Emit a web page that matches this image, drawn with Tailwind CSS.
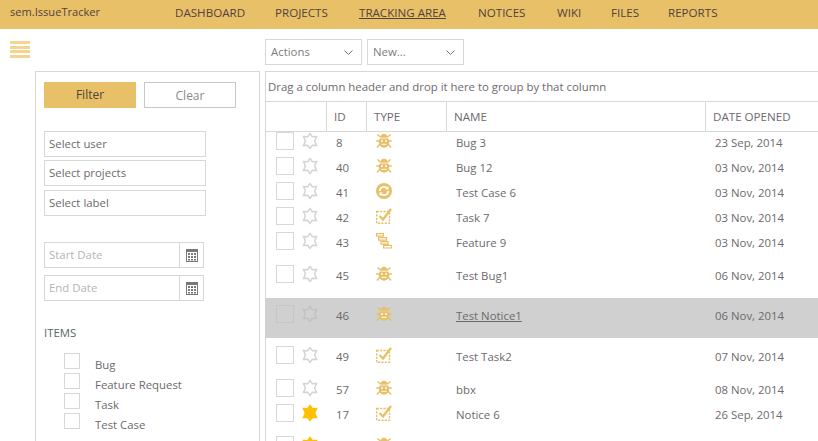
<!DOCTYPE html>
<html lang="en">
<head>
<meta charset="UTF-8">
<title>sem.IssueTracker</title>
<script src="https://cdn.jsdelivr.net/npm/@tailwindcss/browser@4"></script>
</head>
<body class="h-[441px] w-[818px] overflow-hidden bg-white font-['Open_Sans',sans-serif] text-[11.4px] text-[#6e696d]">
<svg class="hidden">
  <symbol id="star" viewBox="0 0 18 18"><path d="M9 1.500l2.300 3.300 4.200-.3-1.900 4.500 1.900 4.500-4.200-.3L9 16.500l-2.300-3.300-4.200.3L4.400 9 2.500 4.500l4.200.3z"/></symbol>
  <symbol id="bug" viewBox="0 0 16 16"><g fill="none" stroke="#e8c068" stroke-width="1.500"><path d="M4.500 4L1.500 1.500M11.500 4l3-2.500M3 8H.2M13 8h2.800M4 11l-3 3.500M12 11l3 3.500"/></g><path d="M8 .8c2.300 0 3.800 1.700 3.800 4H4.200C4.200 2.500 5.700.8 8 .8z" fill="#e8c068"/><path d="M3.700 5.600h8.600c.6 1 .9 2.200.9 3.400 0 3-2.200 5.700-5.200 5.700S2.800 12 2.800 9c0-1.200.3-2.400.9-3.400z" fill="#e8c068"/><circle cx="6" cy="8" r="1" fill="#fff"/><circle cx="10" cy="8" r="1" fill="#fff"/><path d="M5.500 11.300h5" stroke="#fff"/></symbol>
  <symbol id="task" viewBox="0 0 16 16"><path d="M.7 3.500h12.800v11.800H.7z" fill="none" stroke="#e8c068" stroke-width="1.400" stroke-dasharray="2.200 1.200"/><path d="M3.500 8l3.500 3.500L15 1" fill="none" stroke="#e8c068" stroke-width="2.400"/></symbol>
  <symbol id="case" viewBox="0 0 16 16"><circle cx="8" cy="8" r="8" fill="#e8c068"/><path d="M3.800 8a4.200 4.200 0 0 1 7.400-2.700M12.200 8a4.200 4.200 0 0 1-7.400 2.700" fill="none" stroke="#fff" stroke-width="1.700"/><path d="M12.500 3v3.500H9zM3.500 13V9.500H7z" fill="#fff"/></symbol>
  <symbol id="feature" viewBox="0 0 16 16"><g fill="none" stroke="#e8c068" stroke-width="1.200"><path d="M.6.600h6.800v2.600H.6zM2.600 4.600h8v2.600h-8zM5 8.600h7v2.600H5zM7.600 12.400h8V15h-8z"/></g></symbol>
  <symbol id="cal" viewBox="0 0 12 14"><path d="M0 1h12v13H0z" fill="#77787a"/><path d="M1 4h10v9H1z" fill="#fff"/><path d="M2 5h2v2H2zm3 0h2v2H5zm3 0h2v2H8zM2 8h2v2H2zm3 0h2v2H5zm3 0h2v2H8zm-6 3h2v1.500H2zm3 0h2v1.500H5zm3 0h2v1.500H8z" fill="#77787a"/></symbol>
</svg>

<header class="flex h-[29px] items-center bg-[#e8c068] pb-[4px] text-[#54423f]">
  <span class="ml-[10px] w-[165px] text-[11.1px]">sem.IssueTracker</span>
  <nav class="flex text-[11.6px]">
    <a class="w-[100px]">DASHBOARD</a>
    <a class="w-[84px]">PROJECTS</a>
    <a class="w-[119px] underline">TRACKING AREA</a>
    <a class="w-[79px]">NOTICES</a>
    <a class="w-[54px]">WIKI</a>
    <a class="w-[57px]">FILES</a>
    <a>REPORTS</a>
  </nav>
</header>

<div class="flex h-[412px] overflow-hidden">
  <aside class="w-[35px] shrink-0 pt-[12px] pl-[10px]">
    <div class="flex h-[17px] w-[20px] flex-col justify-between">
      <i class="block h-[3px] bg-[#f4d58f]"></i><i class="block h-[3px] bg-[#f4d58f]"></i><i class="block h-[3px] bg-[#f4d58f]"></i><i class="block h-[3px] bg-[#f4d58f]"></i>
    </div>
  </aside>

  <section class="mt-[42px] w-[225px] shrink-0 border-x border-t border-[#d8d8d8] pt-[10px] pl-[8px]">
    <div class="flex gap-[8px]">
      <button class="h-[26px] w-[92px] bg-[#e8c068] text-[12px] text-[#54423f]">Filter</button>
      <button class="h-[26px] w-[92px] border border-[#c8c8c8] pt-[1px] text-[12px] text-[#8a8a8a]">Clear</button>
    </div>
    <div class="mt-[23px] flex flex-col gap-[3px]">
      <div class="flex h-[26px] w-[162px] items-center border border-[#d8d8d8] pl-[4px]">Select user</div>
      <div class="flex h-[26px] w-[162px] items-center border border-[#d8d8d8] pl-[4px]">Select projects</div>
      <div class="mt-[1px] flex h-[26px] w-[162px] items-center border border-[#d8d8d8] pl-[4px]">Select label</div>
    </div>
    <div class="mt-[26px] flex flex-col gap-[7px] text-[#b5b5b5]">
      <div class="flex h-[26px] w-[160px] border border-[#d8d8d8]"><span class="flex flex-1 items-center pl-[4px]">Start Date</span><span class="flex w-[24px] items-center justify-center border-l border-[#d8d8d8]"><svg class="h-[14px] w-[12px]"><use href="#cal"/></svg></span></div>
      <div class="flex h-[26px] w-[160px] border border-[#d8d8d8]"><span class="flex flex-1 items-center pl-[4px]">End Date</span><span class="flex w-[24px] items-center justify-center border-l border-[#d8d8d8]"><svg class="h-[14px] w-[12px]"><use href="#cal"/></svg></span></div>
    </div>
    <div class="mt-[24px] leading-[16px] text-[#566a64]">ITEMS</div>
    <ul class="mt-[12px] ml-[20px]">
      <li class="flex h-[20px] items-start"><i class="block h-[16px] w-[16px] border border-[#d8d8d8]"></i><span class="mt-[4px] ml-[15px] leading-[16px]">Bug</span></li>
      <li class="flex h-[20px] items-start"><i class="block h-[16px] w-[16px] border border-[#d8d8d8]"></i><span class="mt-[4px] ml-[15px] leading-[16px]">Feature Request</span></li>
      <li class="flex h-[20px] items-start"><i class="block h-[16px] w-[16px] border border-[#d8d8d8]"></i><span class="mt-[4px] ml-[15px] leading-[16px]">Task</span></li>
      <li class="flex h-[20px] items-start"><i class="block h-[16px] w-[16px] border border-[#d8d8d8]"></i><span class="mt-[4px] ml-[15px] leading-[16px]">Test Case</span></li>
    </ul>
  </section>

  <main class="ml-[5px] min-w-0 flex-1">
    <div class="mt-[10px] flex h-[26px] gap-[5px] text-[#7c7c7c]">
      <div class="flex w-[97px] items-center justify-between border border-[#d8d8d8] pr-[8px] pl-[5px]">Actions<svg class="h-[5px] w-[9px]" viewBox="0 0 9 5" fill="none" stroke="#777"><path d="M.5.500l4 4 4-4"/></svg></div>
      <div class="flex w-[97px] items-center justify-between border border-[#d8d8d8] pr-[8px] pl-[5px]">New...<svg class="h-[5px] w-[9px]" viewBox="0 0 9 5" fill="none" stroke="#777"><path d="M.5.500l4 4 4-4"/></svg></div>
    </div>
    <div class="mt-[6px] border-t border-l border-[#d8d8d8]">
      <div class="flex h-[29px] items-center pl-[2px]">Drag a column header and drop it here to group by that column</div>
      <div class="grid h-[31px] grid-cols-[61px_40px_80px_259px_1fr] border-y border-[#d8d8d8] text-[11.6px]">
        <span class="border-r border-[#d8d8d8]"></span>
        <span class="flex items-center border-r border-[#d8d8d8] pl-[7px]">ID</span>
        <span class="flex items-center border-r border-[#d8d8d8] pl-[7px]">TYPE</span>
        <span class="flex items-center border-r border-[#d8d8d8] pl-[7px]">NAME</span>
        <span class="flex items-center pl-[7px]">DATE OPENED</span>
      </div>
      <div>
        <div class="flex h-[24px] items-start leading-[18px]"><i class="ml-[10px] block h-[18px] w-[18px] border border-[#d8d8d8]"></i><svg class="ml-[7px] h-[18px] w-[18px] fill-white stroke-[#d4d4d4] stroke-[1.5]"><use href="#star"/></svg><span class="mt-[2px] ml-[17px] w-[40px]">8</span><svg class="mt-px h-[16px] w-[16px]"><use href="#bug"/></svg><span class="mt-[2px] ml-[64px] w-[259px]">Bug 3</span><span class="mt-[2px]">23 Sep, 2014</span></div>
        <div class="flex h-[25px] items-start pt-px leading-[18px]"><i class="ml-[10px] block h-[18px] w-[18px] border border-[#d8d8d8]"></i><svg class="ml-[7px] h-[18px] w-[18px] fill-white stroke-[#d4d4d4] stroke-[1.5]"><use href="#star"/></svg><span class="mt-[2px] ml-[17px] w-[40px]">40</span><svg class="mt-px h-[16px] w-[16px]"><use href="#bug"/></svg><span class="mt-[2px] ml-[64px] w-[259px]">Bug 12</span><span class="mt-[2px]">03 Nov, 2014</span></div>
        <div class="flex h-[25px] items-start pt-px leading-[18px]"><i class="ml-[10px] block h-[18px] w-[18px] border border-[#d8d8d8]"></i><svg class="ml-[7px] h-[18px] w-[18px] fill-white stroke-[#d4d4d4] stroke-[1.5]"><use href="#star"/></svg><span class="mt-[2px] ml-[17px] w-[40px]">41</span><svg class="mt-px h-[16px] w-[16px]"><use href="#case"/></svg><span class="mt-[2px] ml-[64px] w-[259px]">Test Case 6</span><span class="mt-[2px]">03 Nov, 2014</span></div>
        <div class="flex h-[25px] items-start pt-px leading-[18px]"><i class="ml-[10px] block h-[18px] w-[18px] border border-[#d8d8d8]"></i><svg class="ml-[7px] h-[18px] w-[18px] fill-white stroke-[#d4d4d4] stroke-[1.5]"><use href="#star"/></svg><span class="mt-[2px] ml-[17px] w-[40px]">42</span><svg class="mt-px h-[16px] w-[16px]"><use href="#task"/></svg><span class="mt-[2px] ml-[64px] w-[259px]">Task 7</span><span class="mt-[2px]">03 Nov, 2014</span></div>
        <div class="flex h-[25px] items-start pt-px leading-[18px]"><i class="ml-[10px] block h-[18px] w-[18px] border border-[#d8d8d8]"></i><svg class="ml-[7px] h-[18px] w-[18px] fill-white stroke-[#d4d4d4] stroke-[1.5]"><use href="#star"/></svg><span class="mt-[2px] ml-[17px] w-[40px]">43</span><svg class="mt-px h-[16px] w-[16px]"><use href="#feature"/></svg><span class="mt-[2px] ml-[64px] w-[259px]">Feature 9</span><span class="mt-[2px]">03 Nov, 2014</span></div>
        <div class="flex h-[42px] items-start pt-[9px] leading-[18px]"><i class="ml-[10px] block h-[18px] w-[18px] border border-[#d8d8d8]"></i><svg class="ml-[7px] h-[18px] w-[18px] fill-white stroke-[#d4d4d4] stroke-[1.5]"><use href="#star"/></svg><span class="mt-[2px] ml-[17px] w-[40px]">45</span><svg class="mt-px h-[16px] w-[16px]"><use href="#bug"/></svg><span class="mt-[2px] ml-[64px] w-[259px]">Test Bug1</span><span class="mt-[2px]">06 Nov, 2014</span></div>
        <div class="-ml-px flex h-[40px] items-start bg-[#d0d0d0] pt-[7px] pl-px leading-[18px]"><i class="ml-[10px] block h-[18px] w-[18px] border border-[#c6c6c6]"></i><svg class="ml-[7px] h-[18px] w-[18px] fill-[#d0d0d0] stroke-[#c2c2c2] stroke-[1.5]"><use href="#star"/></svg><span class="mt-[2px] ml-[17px] w-[40px]">46</span><svg class="mt-px h-[16px] w-[16px]"><use href="#bug"/></svg><span class="mt-[2px] ml-[64px] w-[259px] underline">Test Notice1</span><span class="mt-[2px]">06 Nov, 2014</span></div>
        <div class="flex h-[40px] items-start pt-[8px] leading-[18px]"><i class="ml-[10px] block h-[18px] w-[18px] border border-[#d8d8d8]"></i><svg class="ml-[7px] h-[18px] w-[18px] fill-white stroke-[#d4d4d4] stroke-[1.5]"><use href="#star"/></svg><span class="mt-[2px] ml-[17px] w-[40px]">49</span><svg class="mt-px h-[16px] w-[16px]"><use href="#task"/></svg><span class="mt-[2px] ml-[64px] w-[259px]">Test Task2</span><span class="mt-[2px]">07 Nov, 2014</span></div>
        <div class="flex h-[25px] items-start pt-px leading-[18px]"><i class="ml-[10px] block h-[18px] w-[18px] border border-[#d8d8d8]"></i><svg class="ml-[7px] h-[18px] w-[18px] fill-white stroke-[#d4d4d4] stroke-[1.5]"><use href="#star"/></svg><span class="mt-[2px] ml-[17px] w-[40px]">57</span><svg class="mt-px h-[16px] w-[16px]"><use href="#bug"/></svg><span class="mt-[2px] ml-[64px] w-[259px]">bbx</span><span class="mt-[2px]">08 Nov, 2014</span></div>
        <div class="flex h-[25px] items-start pt-px leading-[18px]"><i class="ml-[10px] block h-[18px] w-[18px] border border-[#d8d8d8]"></i><svg class="ml-[7px] h-[18px] w-[18px] fill-[#ffc000] stroke-[#ffc000] stroke-[1.5]"><use href="#star"/></svg><span class="mt-[2px] ml-[17px] w-[40px]">17</span><svg class="mt-px h-[16px] w-[16px]"><use href="#task"/></svg><span class="mt-[2px] ml-[64px] w-[259px]">Notice 6</span><span class="mt-[2px]">26 Sep, 2014</span></div>
        <div class="flex h-[13px] items-start overflow-hidden pt-[8px] leading-[18px]"><i class="ml-[10px] block h-[18px] w-[18px] shrink-0 border border-[#d8d8d8]"></i><svg class="ml-[7px] h-[18px] w-[18px] shrink-0 fill-[#ffc000] stroke-[#ffc000] stroke-[1.5]"><use href="#star"/></svg><span class="ml-[57px]"></span><svg class="mt-px h-[16px] w-[16px] shrink-0"><use href="#bug"/></svg></div>
      </div>
    </div>
  </main>
</div>
</body>
</html>
